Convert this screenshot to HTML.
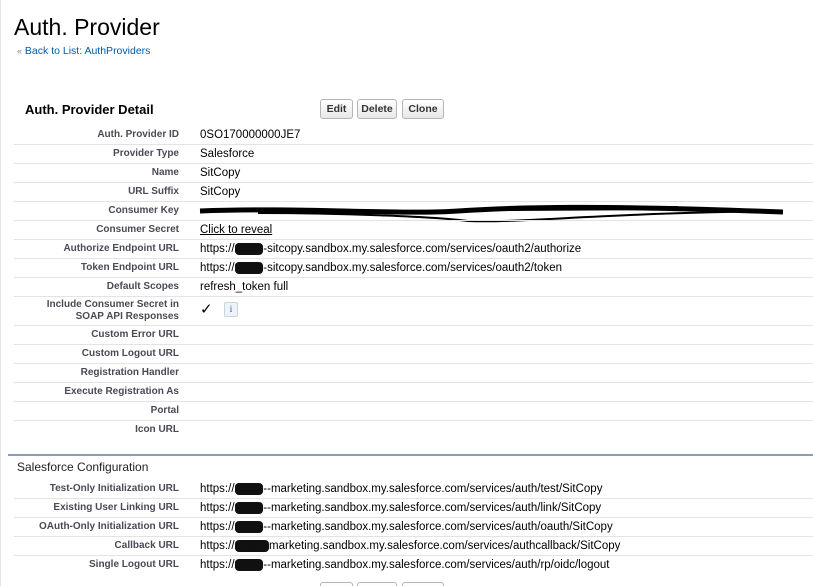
<!DOCTYPE html>
<html style="overflow:hidden"><head><meta charset="utf-8"><style>
html,body{overflow:hidden;height:586px}
body{margin:0;width:813px;background:#fff;font-family:"Liberation Sans",Arial,sans-serif;position:relative;color:#000}
.a{position:absolute}
h1{position:absolute;left:14px;top:14px;margin:0;font-size:23px;font-weight:normal;color:#000}
.back{left:17px;top:45px;font-size:10.5px;color:#015ba7}
.back span{color:#888;font-size:9px}
.hd{left:25px;top:102px;font-size:13px;font-weight:bold;color:#000}
.btn{position:absolute;top:99px;height:20px;border:1px solid #b5b5b5;border-radius:3px;background:linear-gradient(#fff,#e8e8e8);font-size:10.5px;font-weight:bold;color:#333;text-align:center;line-height:19px;box-sizing:border-box}
.lab{position:absolute;right:634px;font-size:10px;font-weight:bold;color:#4a4a56;text-align:right;white-space:nowrap}
.val{position:absolute;left:200px;font-size:11.5px;white-space:nowrap;margin-top:1px}
.sep{position:absolute;left:14px;right:0;height:1px;background:#e3e3e3}
</style></head><body>
<div class="a" style="left:0;top:0;width:1px;height:586px;background:#e6e6e6"></div>
<h1>Auth. Provider</h1>
<div class="a back"><span>«</span> Back to List: AuthProviders</div>
<div class="a hd">Auth. Provider Detail</div>
<div class="btn" style="left:320px;width:33px">Edit</div>
<div class="btn" style="left:357px;width:40px">Delete</div>
<div class="btn" style="left:402px;width:42px">Clone</div>

<div class="lab" style="top:129px">Auth. Provider ID</div><div class="val" style="top:128px">0SO170000000JE7</div>
<div class="sep" style="top:144px"></div>
<div class="lab" style="top:148px">Provider Type</div><div class="val" style="top:147px">Salesforce</div>
<div class="sep" style="top:163px"></div>
<div class="lab" style="top:167px">Name</div><div class="val" style="top:166px">SitCopy</div>
<div class="sep" style="top:182px"></div>
<div class="lab" style="top:186px">URL Suffix</div><div class="val" style="top:185px">SitCopy</div>
<div class="sep" style="top:201px"></div>
<div class="lab" style="top:205px">Consumer Key</div>
<svg class="a" style="left:198px;top:203px" width="585" height="20"><path d="M2 8 C100 4,200 12,260 8 S400 2,585 9" stroke="#000" stroke-width="5" fill="none"/><path d="M60 10 C150 10,240 14,270 18 C330 20,400 10,585 8" stroke="#000" stroke-width="2" fill="none"/><path d="M300 6 L480 5" stroke="#000" stroke-width="4"/></svg>
<div class="sep" style="top:220px"></div>
<div class="lab" style="top:224px">Consumer Secret</div><div class="val" style="top:223px;text-decoration:underline">Click to reveal</div>
<div class="sep" style="top:239px"></div>
<div class="lab" style="top:243px">Authorize Endpoint URL</div><div class="val" style="top:242px">https://<span style="background:#111;border-radius:4px;color:#111">xxxxx</span>-sitcopy.sandbox.my.salesforce.com/services/oauth2/authorize</div>
<div class="sep" style="top:258px"></div>
<div class="lab" style="top:262px">Token Endpoint URL</div><div class="val" style="top:261px">https://<span style="background:#111;border-radius:4px;color:#111">xxxxx</span>-sitcopy.sandbox.my.salesforce.com/services/oauth2/token</div>
<div class="sep" style="top:277px"></div>
<div class="lab" style="top:281px">Default Scopes</div><div class="val" style="top:280px">refresh_token full</div>
<div class="sep" style="top:296px"></div>
<div class="lab" style="top:299px;line-height:12px">Include Consumer Secret in<br>SOAP API Responses</div>
<div class="val" style="top:299px;font-size:15px">✓</div>
<div class="a" style="left:224px;top:302px;width:12px;height:13px;border:1px solid #c8d4e0;border-radius:2px;background:#eef3f8;font-size:9px;color:#1a5fa8;text-align:center;line-height:13px;font-family:'Liberation Serif',serif">i</div>
<div class="sep" style="top:325px"></div>
<div class="lab" style="top:329px">Custom Error URL</div>
<div class="sep" style="top:344px"></div>
<div class="lab" style="top:348px">Custom Logout URL</div>
<div class="sep" style="top:363px"></div>
<div class="lab" style="top:367px">Registration Handler</div>
<div class="sep" style="top:382px"></div>
<div class="lab" style="top:386px">Execute Registration As</div>
<div class="sep" style="top:401px"></div>
<div class="lab" style="top:405px">Portal</div>
<div class="sep" style="top:420px"></div>
<div class="lab" style="top:424px">Icon URL</div>

<div class="a" style="left:8px;right:0;top:454px;height:2px;background:#8a9ebe"></div>
<div class="a" style="left:17px;top:460px;font-size:12px;color:#222">Salesforce Configuration</div>

<div class="lab" style="top:483px">Test-Only Initialization URL</div><div class="val" style="top:482px">https://<span style="background:#111;border-radius:4px;color:#111">xxxxx</span>--marketing.sandbox.my.salesforce.com/services/auth/test/SitCopy</div>
<div class="sep" style="top:498px"></div>
<div class="lab" style="top:502px">Existing User Linking URL</div><div class="val" style="top:501px">https://<span style="background:#111;border-radius:4px;color:#111">xxxxx</span>--marketing.sandbox.my.salesforce.com/services/auth/link/SitCopy</div>
<div class="sep" style="top:517px"></div>
<div class="lab" style="top:521px">OAuth-Only Initialization URL</div><div class="val" style="top:520px">https://<span style="background:#111;border-radius:4px;color:#111">xxxxx</span>--marketing.sandbox.my.salesforce.com/services/auth/oauth/SitCopy</div>
<div class="sep" style="top:536px"></div>
<div class="lab" style="top:540px">Callback URL</div><div class="val" style="top:539px">https://<span style="background:#111;border-radius:4px;color:#111">xxxxxx</span>marketing.sandbox.my.salesforce.com/services/authcallback/SitCopy</div>
<div class="sep" style="top:555px"></div>
<div class="lab" style="top:559px">Single Logout URL</div><div class="val" style="top:558px">https://<span style="background:#111;border-radius:4px;color:#111">xxxxx</span>--marketing.sandbox.my.salesforce.com/services/auth/rp/oidc/logout</div>

<div class="btn" style="left:320px;top:582px;width:33px"></div>
<div class="btn" style="left:357px;top:582px;width:40px"></div>
<div class="btn" style="left:402px;top:582px;width:42px"></div>
</body></html>
